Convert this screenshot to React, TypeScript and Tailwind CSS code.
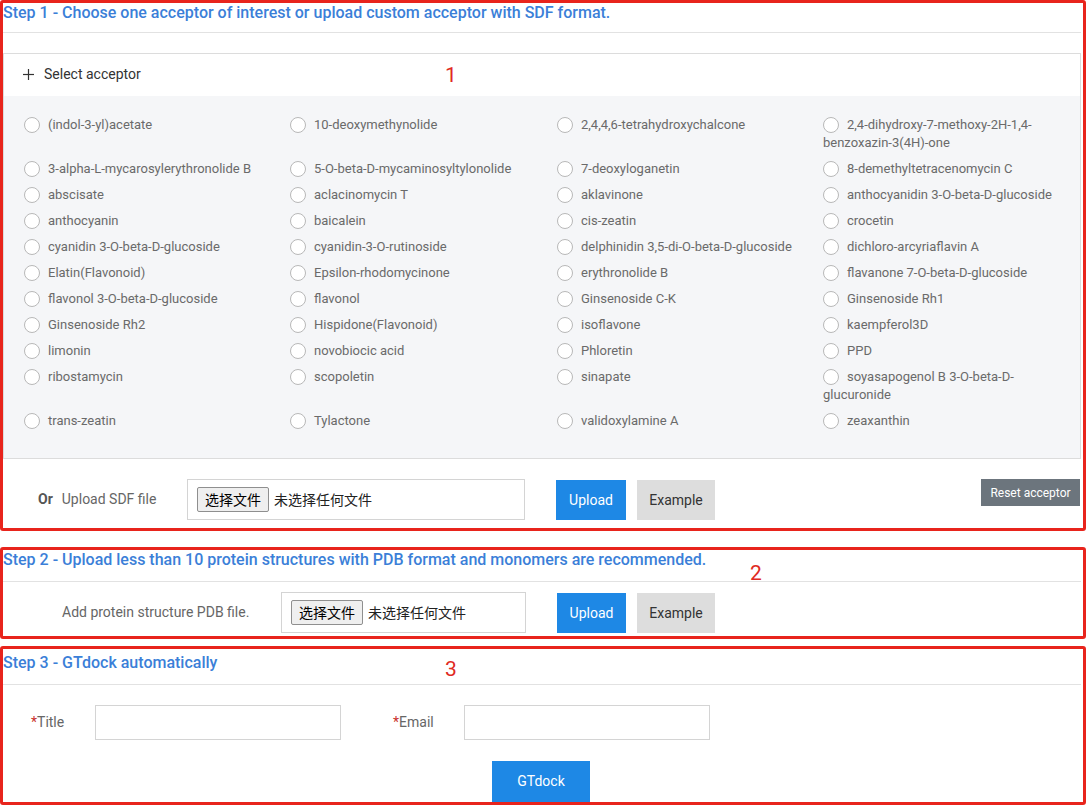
import React from "react";

const items: string[] = [
  "(indol-3-yl)acetate",
  "10-deoxymethynolide",
  "2,4,4,6-tetrahydroxychalcone",
  "2,4-dihydroxy-7-methoxy-2H-1,4-benzoxazin-3(4H)-one",
  "3-alpha-L-mycarosylerythronolide B",
  "5-O-beta-D-mycaminosyltylonolide",
  "7-deoxyloganetin",
  "8-demethyltetracenomycin C",
  "abscisate",
  "aclacinomycin T",
  "aklavinone",
  "anthocyanidin 3-O-beta-D-glucoside",
  "anthocyanin",
  "baicalein",
  "cis-zeatin",
  "crocetin",
  "cyanidin 3-O-beta-D-glucoside",
  "cyanidin-3-O-rutinoside",
  "delphinidin 3,5-di-O-beta-D-glucoside",
  "dichloro-arcyriaflavin A",
  "Elatin(Flavonoid)",
  "Epsilon-rhodomycinone",
  "erythronolide B",
  "flavanone 7-O-beta-D-glucoside",
  "flavonol 3-O-beta-D-glucoside",
  "flavonol",
  "Ginsenoside C-K",
  "Ginsenoside Rh1",
  "Ginsenoside Rh2",
  "Hispidone(Flavonoid)",
  "isoflavone",
  "kaempferol3D",
  "limonin",
  "novobiocic acid",
  "Phloretin",
  "PPD",
  "ribostamycin",
  "scopoletin",
  "sinapate",
  "soyasapogenol B 3-O-beta-D-glucuronide",
  "trans-zeatin",
  "Tylactone",
  "validoxylamine A",
  "zeaxanthin",
];

function FileBox({ width }: { width: string }) {
  return (
    <div
      className={`${width} h-[41px] border border-[#d4d4d4] bg-white flex items-center pl-[9px] shrink-0`}
    >
      <span className="h-[25px] px-[7px] flex items-center border border-[#8f8f8f] rounded-[2px] bg-[#efefef] text-[14px] text-black leading-none">
        选择文件
      </span>
      <span className="ml-[5px] text-[14px] text-[#222] leading-none">未选择任何文件</span>
    </div>
  );
}

function Heading({ text, cls }: { text: string; cls: string }) {
  return (
    <div
      className={`${cls} leading-[20px] text-[16px] font-medium text-[#3b7fd8] border-b border-[#e2e2e2] whitespace-nowrap`}
    >
      {text}
    </div>
  );
}

export default function App() {
  return (
    <div
      className="relative w-[1088px] h-[807px] bg-white overflow-hidden"
      style={{ fontFamily: "Roboto, 'Noto Sans CJK SC', sans-serif" }}
    >
      {/* Box 1 */}
      <div className="w-[1086px] h-[531px] border-[3px] border-[#e8241c] rounded-[3px] flex flex-col">
        <Heading
          cls="pt-0 pb-[9px] mr-[2px]"
          text="Step 1 - Choose one acceptor of interest or upload custom acceptor with SDF format."
        />
        <div className="mt-[20px] mr-[2px] border border-[#dcdcdc]">
          <div className="h-[42px] bg-white flex items-center pl-[19px] pb-[2px] text-[14px] text-[#333]">
            <svg width="11" height="11" viewBox="0 0 11 11" className="mr-[10px]">
              <line x1="5.5" y1="0" x2="5.5" y2="11" stroke="#333" strokeWidth="1.2" />
              <line x1="0" y1="5.5" x2="11" y2="5.5" stroke="#333" strokeWidth="1.2" />
            </svg>
            <span>Select acceptor</span>
          </div>
          <div className="bg-[#f5f6f8] pt-[20px] pb-[28px] pl-[20px]">
            <div className="grid grid-cols-[266px_267px_266px_240px] gap-y-[8px]">
              {items.map((t) => (
                <div key={t} className="text-[13px] leading-[18px] text-[#6a6a6a]">
                  <span className="inline-block w-[16px] h-[16px] rounded-full border border-[#b8b8b8] bg-white align-[-4px] mr-[8px]" />
                  {t}
                </div>
              ))}
            </div>
          </div>
        </div>
        <div className="flex items-start pt-[20px] mr-[3px]">
          <div className="w-[184px] h-[41px] pl-[35px] flex items-center text-[14px]">
            <span className="font-bold text-[#555]">Or</span>
            <span className="ml-[9px] text-[#666]">Upload SDF file</span>
          </div>
          <FileBox width="w-[338px]" />
          <button className="ml-[31px] mt-[1px] w-[70px] h-[40px] bg-[#1e88e5] text-white text-[14px]">
            Upload
          </button>
          <button className="ml-[11px] mt-[1px] w-[78px] h-[40px] bg-[#dddddd] text-[#333] text-[14px]">
            Example
          </button>
          <button className="ml-auto w-[99px] h-[27px] bg-[#6c757d] text-white text-[12px]">
            Reset acceptor
          </button>
        </div>
      </div>

      {/* Box 2 */}
      <div className="mt-[16px] w-[1086px] h-[92px] border-[3px] border-[#e8241c] rounded-[3px] flex flex-col">
        <Heading
          cls="pt-0 pb-[11px] mr-[2px]"
          text="Step 2 - Upload less than 10 protein structures with PDB format and monomers are recommended."
        />
        <div className="flex items-start pt-[10px]">
          <div className="w-[278px] h-[41px] pl-[59px] flex items-center text-[14px] text-[#666]">
            Add protein structure PDB file.
          </div>
          <FileBox width="w-[245px]" />
          <button className="ml-[31px] mt-[1px] w-[69px] h-[40px] bg-[#1e88e5] text-white text-[14px]">
            Upload
          </button>
          <button className="ml-[11px] mt-[1px] w-[78px] h-[40px] bg-[#dddddd] text-[#333] text-[14px]">
            Example
          </button>
        </div>
      </div>

      {/* Box 3 */}
      <div className="mt-[7px] w-[1086px] h-[159px] border-[3px] border-[#e8241c] rounded-[3px] flex flex-col overflow-hidden">
        <Heading cls="pt-[4px] pb-[11px] mr-[2px]" text="Step 3 - GTdock automatically" />
        <div className="flex items-center pt-[20px]">
          <div className="w-[92px] pl-[28px] text-[14px] text-[#666]">
            <span className="text-[#c9302c]">*</span>Title
          </div>
          <div className="w-[246px] h-[35px] border border-[#d4d4d4] bg-white" />
          <div className="ml-[52px] w-[71px] text-[14px] text-[#666]">
            <span className="text-[#c9302c]">*</span>Email
          </div>
          <div className="w-[246px] h-[35px] border border-[#d4d4d4] bg-white" />
        </div>
        <div className="pt-[21px] pl-[489px]">
          <button className="w-[98px] h-[41px] bg-[#1e88e5] text-white text-[14px]">GTdock</button>
        </div>
      </div>

      {/* annotation numbers */}
      <span className="absolute left-[445px] top-[62px] text-[21px] leading-[26px] text-[#e02a22]">1</span>
      <span className="absolute left-[750px] top-[560px] text-[21px] leading-[26px] text-[#e02a22]">2</span>
      <span className="absolute left-[445px] top-[656px] text-[21px] leading-[26px] text-[#e02a22]">3</span>
    </div>
  );
}
